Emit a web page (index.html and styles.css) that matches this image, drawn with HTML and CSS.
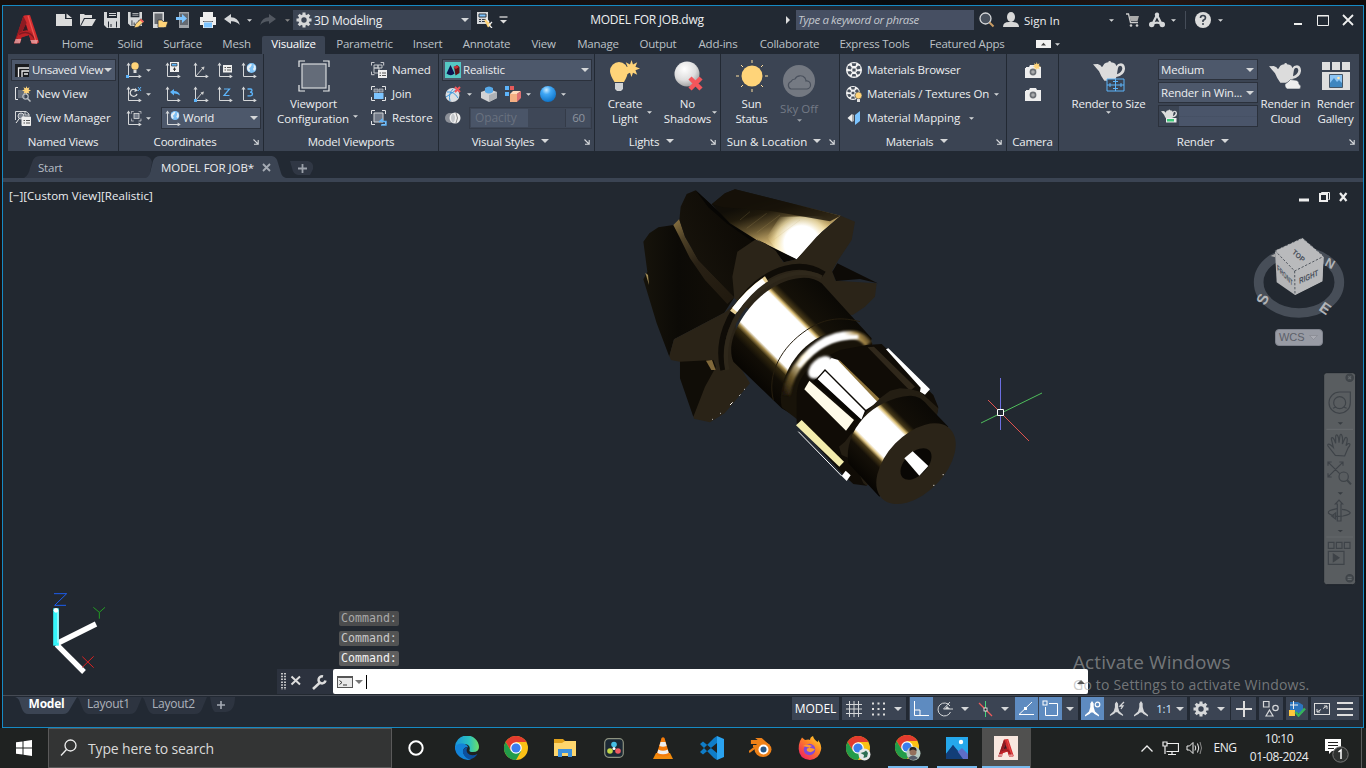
FILE: index.html
```html
<!DOCTYPE html>
<html lang="en">
<head>
<meta charset="utf-8">
<title>MODEL FOR JOB.dwg</title>
<link rel="stylesheet" href="styles.css">
</head>
<body>
<svg class="defs" width="0" height="0">
  <defs>
    <symbol id="dn" viewBox="0 0 8 4"><path d="M0 0H8L4 4Z" fill="currentColor"/></symbol>
    <symbol id="launch" viewBox="0 0 6 6"><path d="M.5 .5L4.5 4.5M5.2 1V5.2H1" stroke="#d8dadd" fill="none" stroke-width="1.1"/></symbol>
    <symbol id="ax" viewBox="0 0 16 16"><path d="M2.5 3V14.5H13" stroke="#d5d7d9" fill="none"/><path d="M.5 3.6L2.5 .6 4.5 3.6ZM12.6 12.5L15.8 14.5 12.6 16.4Z" fill="#d5d7d9"/></symbol>
    <symbol id="globe" viewBox="0 0 10 10"><circle cx="5" cy="5" r="5" fill="#7cc0f5"/><path d="M1 3.2L4 .8 5.5 1.5 4 4.2 2.6 5.2 3.6 7.6 2.6 8.8Q.5 7 .4 5ZM7 1.6L9 3 9.4 6 7.6 8 6.4 6 7.4 4.4Z" fill="#e8eef2"/></symbol>
    <symbol id="sun" viewBox="0 0 16 16"><path d="M8 0L9.4 4.2 13.4 2.2 11.7 6.4 16 8 11.7 9.6 13.4 13.8 9.4 11.9 8 16 6.6 11.9 2.6 13.8 4.3 9.6 0 8 4.3 6.4 2.6 2.2 6.6 4.2Z" fill="#ffd479"/></symbol>
    <symbol id="cnr" viewBox="0 0 16 16"><path d="M.5 4V.5H4M11 .5H14.5V4M.5 11V14.5H4M14.5 11V14.5H11" fill="none" stroke="#e3e4e6"/></symbol>
    <symbol id="gear" viewBox="0 0 16 16"><path d="M8 .5V15.5M.5 8H15.5M2.7 2.7L13.3 13.3M13.3 2.7L2.7 13.3" stroke="#d5d7d9" stroke-width="3"/><circle cx="8" cy="8" r="4.2" fill="none" stroke="#d5d7d9" stroke-width="3"/><circle cx="8" cy="8" r="2.7" fill="#3b4453"/></symbol>
    <symbol id="teapot" viewBox="0 0 96 64"><path d="M0 13L14 12Q24 14 27 22L34 11Q38 8 46 7A4 4 0 1 1 54 7Q62 8 67 11L70 18Q74 10 84 10Q97 12 96 28Q94 47 70 51L66 62H34Q24 50 18 34ZM75 24Q73 34 72 43 86 37 88 26 88 17 81 17 76 18 75 24Z" fill="#dcdcdc" fill-rule="evenodd"/></symbol>
    <symbol id="chk" viewBox="0 0 16 16"><circle cx="8" cy="8" r="8" fill="#f4f4f4"/><path d="M5.7 1.2H10.3L9.6 4H6.4ZM1.8 4.2L4 3.6 5.8 5.8 4.8 7.4 1.6 6.8ZM14.2 4.2L12 3.6 10.2 5.8 11.2 7.4 14.4 6.8ZM6.4 6.6H9.6V9.4H6.4ZM1.5 9.4L4.5 9 6 10.6 4.5 12.8 2.5 12ZM14.5 9.4L11.5 9 10 10.6 11.5 12.8 13.5 12ZM6.4 12H9.6L10.2 14.6H5.8Z" fill="#49515d"/></symbol>
    <symbol id="cam" viewBox="0 0 16 13"><path d="M0 3H1V2H4L5 0H11L12 2H16V13H0Z" fill="#eee"/><circle cx="8" cy="7" r="3.4" fill="#6b6f75"/><circle cx="8" cy="7" r="1.8" fill="#a9abad"/></symbol>
    <symbol id="disk" viewBox="0 0 16 16"><path d="M0 0H3V6H13V0H16V16H3L0 13Z" fill="#d5d7d9"/><path d="M5 1H12V2H5ZM5 3H12V4H5ZM4 9H13V15H4Z" fill="#d5d7d9"/><path d="M4.5 9.5V15.5M12.5 9.5V15.5M7 12V15" stroke="#222933"/></symbol>
    <symbol id="fitA" viewBox="0 0 75 87"><path d="M28 3Q33 0 48 0L75 82 69 86H53L45 60 23 66 18 85H0L7 68Z" fill="#d22b2e"/><path d="M35 25L23 55 43 50Z" fill="#3a1a22"/><path d="M28 3L38 24 9 76 18 85H0Z" fill="#8e1b22"/><path d="M15 54Q40 38 58 54L66 76 53 85 45 60Q30 66 6 72Z" fill="#bd2227"/><path d="M15 58Q45 42 62 72" stroke="#821820" stroke-width="4" fill="none"/><path d="M42 2L67 83" stroke="#ed5550" stroke-width="4"/><path d="M0 85L5 72H22L18 85ZM53 85L49 75H72L69 86Z" fill="#e9afb0" opacity=".75"/></symbol>
    <symbol id="chrome" viewBox="0 0 24 24"><circle cx="12" cy="12" r="12" fill="#fbc116"/><path d="M1.6 6A12 12 0 0 1 22.4 6H12L7 15Z" fill="#e33b2e"/><path d="M1.6 6A12 12 0 0 0 12 24L17.2 15 7 15Z" fill="#229c4a"/><circle cx="12" cy="12" r="5.8" fill="#fff"/><circle cx="12" cy="12" r="4.6" fill="#3b7ded"/></symbol>
    <symbol id="compA" viewBox="0 0 16 16"><path d="M6.3 6V2.5L8 0 9.7 2.5V6L11 10.5 15 14V15.5L10.5 13 9 11.5H7L5.5 13 1 15.5V14L5 10.5Z" fill="currentColor"/></symbol>
  </defs>
</svg>

<div class="window">
  <header class="head">
    <div class="logo"><svg width="25" height="29"><use href="#fitA"/></svg></div>
    <div class="titlebar">
      <svg width="16" height="16"><path d="M0 2H9V7H16V14H0ZM10.5 1.5L16 6H10.5Z" fill="#dcdcdc"/></svg>
      <svg width="16" height="16"><path d="M0 14V2H4L5 3H12V6H4L1 12Z" fill="#dcdcdc"/><path d="M4.7 7H16L12 14H1Z" fill="#dcdcdc"/></svg>
      <svg width="16" height="16"><use href="#disk"/></svg>
      <svg width="16" height="16"><use href="#disk" width="14" height="14"/><path d="M6 16L7.5 12 13 6.8 16 9.5 10.5 15Z" fill="#ffd479" stroke="#222933" stroke-width=".7"/><path d="M13 6.8L16 9.5 14.8 10.7 11.7 8Z" fill="#f15b5b"/></svg>
      <svg width="16" height="16"><path d="M1 0H12V16H1Z" fill="#d5d7d9"/><path d="M2.5 1.5H10.5V12H2.5Z" fill="#686c72"/><path d="M6 8H10L11 9.5H16L14 15.5H6Z" fill="#ffd479" stroke="#222933" stroke-width=".7"/></svg>
      <svg width="16" height="16"><path d="M3 0H13V16H3Z" fill="#9ea2a7"/><path d="M4 1.5H12V13H4Z" fill="#646a72"/><path d="M0 5H6V2L11 6.500 6 11V8H0Z" fill="#7cc4ff"/></svg>
      <svg width="16" height="16"><path d="M3 0H13V5H3ZM0 5H16V13H13V9H3V13H0Z" fill="#eee"/><path d="M3.500 10H12.500V16H3.500Z" fill="#7cc4ff" stroke="#eee"/></svg>
      <svg width="16" height="16"><path d="M0 7L7 2V5.300Q14 5.500 15.800 13 12 9 7 9.300V12Z" fill="#d5d7d9"/></svg>
      <svg class="dn5" ><use href="#dn"/></svg>
      <svg width="16" height="16"><path d="M16 7L9 2V5.300Q2 5.500 .2 13 4 9 9 9.300V12Z" fill="#525861"/></svg>
      <svg class="dn5 dim"><use href="#dn"/></svg>
      <div class="workspace"><svg width="16" height="16"><use href="#gear"/></svg><span>3D Modeling</span><svg class="dn8"><use href="#dn"/></svg></div>
      <svg width="16" height="16"><path d="M0 0H11V12H0Z" fill="#d5d7d9"/><path d="M2 2H9V5H2Z" fill="#7cc4ff" stroke="#333a45"/><path d="M2 7.500H4M5 7.500H9M2 9.500H4M5 9.500H8" stroke="#333a45"/><path d="M7 8L10 7 14 13 11 15.500Z" fill="#ffd479"/><path d="M9 6.500L12 10M15 10L12 13 15 16" stroke="#eee" fill="none" stroke-width="1.300"/></svg>
      <svg width="9" height="8"><path d="M.5 1H8.500" stroke="#ddd" stroke-width="1.300"/><path d="M1 4H8L4.500 7.500Z" fill="#ddd"/></svg>
      <span class="doc-title">MODEL FOR JOB.dwg</span>
      <svg class="pl" width="5" height="8"><path d="M0 0L4 4 0 8Z" fill="#ddd"/></svg>
      <span class="search">Type a keyword or phrase</span>
      <svg width="16" height="16"><circle cx="6.500" cy="6.500" r="5.500" fill="#48505c" stroke="#d5d7d9" stroke-width="1.300"/><path d="M10.500 10.500L14.500 14.500" stroke="#c99c63" stroke-width="2"/></svg>
      <svg width="16" height="16"><ellipse cx="8" cy="5" rx="4" ry="5" fill="#d8d8d8"/><path d="M0 15Q0 10 6 10H10Q16 10 16 15Z" fill="#d8d8d8"/></svg>
      <span class="signin">Sign In</span>
      <svg class="dn5"><use href="#dn"/></svg>
      <svg class="cart" width="14" height="14"><path d="M0 1H2.500L4.500 9.500H12" stroke="#ccc" fill="none" stroke-width="1.300"/><path d="M3.500 3H13L11.500 8H4.500Z" fill="#aaa"/><circle cx="5" cy="12.500" r="1.300" fill="#ccc"/><circle cx="11" cy="12.500" r="1.300" fill="#ccc"/></svg>
      <svg width="16" height="16"><path d="M8 3L3.300 12.300Q8 9 12.700 12.300Z" fill="none" stroke="#d5d7d9" stroke-width="2.300"/><circle cx="8" cy="2.700" r="2.200" fill="#d5d7d9"/><circle cx="2.700" cy="12.500" r="2.700" fill="#d5d7d9"/><circle cx="13.300" cy="12.500" r="2.700" fill="#d5d7d9"/></svg>
      <svg class="dn5"><use href="#dn"/></svg>
      <i class="vsep"></i>
      <svg width="16" height="16"><circle cx="8" cy="8" r="8" fill="#dcdcdc"/><path d="M5.500 6Q5.500 3.500 8 3.500T10.500 6Q10.500 7.200 8 8.500V10" fill="none" stroke="#38404b" stroke-width="1.600"/><circle cx="8" cy="12" r="1" fill="#38404b"/></svg>
      <svg class="dn5"><use href="#dn"/></svg>
      <i></i>
      <svg width="8" height="14"><path d="M0 11H8" stroke="#eee" stroke-width="2"/></svg>
      <svg width="12" height="11"><path d="M.5 .5H11.500V10.500H.5Z" fill="none" stroke="#eee"/><path d="M0 1H12" stroke="#eee"/></svg>
      <svg width="12" height="12"><path d="M1 1L11 11M11 1L1 11" stroke="#eee" stroke-width="1.800"/></svg>
    </div>
    <nav class="tabs">
      <span class="home">Home</span><span>Solid</span><span>Surface</span><span>Mesh</span><span class="on">Visualize</span><span>Parametric</span><span>Insert</span><span>Annotate</span><span>View</span><span>Manage</span><span>Output</span><span>Add-ins</span><span>Collaborate</span><span>Express Tools</span><span>Featured Apps</span>
      <span class="mini"><svg width="15" height="8"><path d="M0 0H15V8H0Z" fill="#f2f2f2"/><path d="M5 5.500H10L7.500 2.800Z" fill="#444"/></svg><svg class="dn5"><use href="#dn"/></svg></span>
    </nav>
  </header>

  <section class="ribbon">
    <div class="panel">
      <div class="rows views">
        <div class="combo"><svg width="14" height="13"><path d="M0 0H14V13H0Z" fill="#1a1c1f"/><path d="M3.500 13V4H14M7 13V7H14M9 10H13" stroke="#eee" fill="none" stroke-width="1.300"/></svg><span class="clip">Unsaved View</span><svg class="dn8"><use href="#dn"/></svg></div>
        <div class="row"><svg width="16" height="16"><path d="M3 1.500H.5V13.500H3" stroke="#e3e4e6" fill="none"/><path d="M3 4H10V12H3Z" fill="#646c79"/><use href="#sun" x="7" y="0" width="9" height="9"/><circle cx="10.500" cy="10.500" r="2.700" fill="none" stroke="#b9bdc3" stroke-width="1.200"/><path d="M12.500 12.500L15.500 15.500" stroke="#b9bdc3" stroke-width="1.500"/></svg><span>New View</span></div>
        <div class="row"><svg width="16" height="16"><path d="M.5 10V1.500H11L14 4V6M10 1.500V5H14" stroke="#d5d7d9" fill="none"/><circle cx="6" cy="6" r="3" fill="#777f8b" stroke="#d5d7d9"/><path d="M1 13L4 9M7 7H15.500V15.500H7Z" stroke="#eee" fill="#eee"/><path d="M8.500 10.500H10M11 10.500H15M8.500 13H10M11 13H15" stroke="#555"/></svg><span>View Manager</span></div>
      </div>
      <div class="ptitle"><span>Named Views</span></div>
    </div>

    <div class="panel">
      <div class="coords">
        <svg width="16" height="16"><use href="#ax"/><rect y="13" width="3" height="3" fill="#5db4fa"/><circle cx="9" cy="4" r="3.700" fill="#ffd479"/><path d="M7.500 8H10.500V11H7.500Z" fill="#ddd"/></svg><svg class="dn5"><use href="#dn"/></svg>
        <svg width="16" height="16"><use href="#ax"/><path d="M5 0H14V10H5Z" fill="#eee"/><path d="M6.500 1.500H12V4H6.500Z" fill="#5db4fa" stroke="#333" stroke-width=".7"/><path d="M9.500 5.500V9M8 7.200H11" stroke="#333"/></svg>
        <svg width="16" height="16"><use href="#ax"/><path d="M3 14L10 6" stroke="#ccc"/><path d="M11.500 4.500L10.800 8 8 5.500Z" fill="#ccc"/></svg>
        <svg width="16" height="16"><use href="#ax"/><path d="M6 3H15V10.500H6Z" fill="#eee"/><path d="M7.500 5.500H9M10 5.500H14M7.500 8H9M10 8H14" stroke="#555"/></svg>
        <svg width="16" height="16"><use href="#ax"/><use href="#globe" x="5.500" y="1" width="10" height="10"/></svg>
        <svg width="16" height="16"><use href="#ax"/><path d="M9.500 3.800A3.500 3.500 0 1 0 11 8" fill="none" stroke="#ddd" stroke-width="1.300"/><path d="M9 2L12 4.500 8.500 6Z" fill="#ddd"/><path d="M12 1L15 5M15 1L12 5" stroke="#5db4fa"/></svg><svg class="dn5"><use href="#dn"/></svg>
        <svg width="16" height="16"><use href="#ax"/><path d="M5 6L9 3V5Q14 5 15 9.500 12 7.300 9 7.500V9.500Z" fill="#5db4fa"/></svg>
        <svg width="16" height="16"><use href="#ax"/><path d="M3 14L9 7" stroke="#ccc"/><path d="M11 5.500L10 9 7.500 6.500Z" fill="#ccc"/><rect x="1" y="13" width="3" height="3" fill="#5db4fa"/></svg>
        <svg width="16" height="16"><use href="#ax"/><path d="M7 3H12.500L7 9.500H12.500" stroke="#5db4fa" fill="none" stroke-width="1.200"/></svg>
        <svg width="16" height="16"><use href="#ax"/><path d="M6.500 3H9.500Q11 3 11 4.500T9 6.200Q11.500 6.500 11.500 8T9.500 9.800H6.500" stroke="#5db4fa" fill="none" stroke-width="1.300"/></svg>
        <svg width="16" height="16"><use href="#ax"/><use href="#cnr" x="5" y="1" width="11" height="11"/><rect x="8" y="3.500" width="5" height="5" fill="#717987" stroke="#ddd" stroke-width=".8"/></svg><svg class="dn5"><use href="#dn"/></svg>
        <div class="combo world"><svg width="16" height="16"><use href="#ax"/><use href="#globe" x="5.500" y="1" width="9" height="9"/></svg><span>World</span><svg class="dn8"><use href="#dn"/></svg></div>
      </div>
      <div class="ptitle lt12"><span>Coordinates</span><svg class="la"><use href="#launch"/></svg></div>
    </div>

    <div class="panel">
      <div class="vports">
        <div class="big w100"><svg width="32" height="32"><path d="M1 7V1H7M25 1H31V7M1 25V31H7M31 25V31H25" fill="none" stroke="#eceded" stroke-width="1.200"/><rect x="4" y="4" width="24" height="24" fill="#646c79" stroke="#d8dadd" stroke-width="1.200"/></svg><span>Viewport</span><span>Configuration <svg class="dn5"><use href="#dn"/></svg></span></div>
        <div class="rows vp">
          <div class="row"><svg width="16" height="16"><use href="#cnr" width="14" height="14"/><path d="M3 3H7V6H3ZM7 3H11V6H7ZM3 6H8V11H3Z" fill="none" stroke="#c5c8cc"/><path d="M7 8H16V16H7Z" fill="#eee"/><path d="M8.500 11H10M11 11H15M8.500 13.500H10M11 13.500H15" stroke="#555"/></svg><span>Named</span></div>
          <div class="row"><svg width="16" height="16"><use href="#cnr"/><path d="M3 3H7V6H3ZM8 3H12V6H8Z" fill="#717987" stroke="#c5c8cc" stroke-width=".7"/><path d="M3 7H12.500V13H3Z" fill="#7cc4ff"/></svg><span>Join</span></div>
          <div class="row"><svg width="16" height="16"><use href="#cnr"/><path d="M3 3H12V12H3Z" fill="#717987" stroke="#d0d3d6"/><path d="M8 12L11 9.500V11.500H15V15H10" fill="none" stroke="#5db4fa" stroke-width="1.400"/></svg><span>Restore</span></div>
        </div>
      </div>
      <div class="ptitle"><span>Model Viewports</span></div>
    </div>

    <div class="panel">
      <div class="rows styles">
        <div class="combo"><svg width="16" height="16"><path d="M0 0H16V16H0Z" fill="#55c8c5"/><path d="M5.500 3L9.500 11.500Q6 15 1.500 11.500Z" fill="#0d1550"/><path d="M9 5L12 3 14.500 5V11L10.500 13.500Z" fill="#5b1015"/><path d="M8 5L12 3.500 14 5 11 7Z" fill="#c83038"/></svg><span>Realistic</span><svg class="dn8"><use href="#dn"/></svg></div>
        <div class="row vicons">
          <svg width="16" height="16"><circle cx="7.500" cy="9" r="7" fill="#dcdfe3"/><path d="M2 6Q9 5 13 12M8 3Q3 8 5 15M1 11Q6 8 12 3" stroke="#419bdf" fill="none"/><path d="M10 1L15 6M15 1L10 6" stroke="#f0555a" stroke-width="2"/></svg><svg class="dn5"><use href="#dn"/></svg>
          <svg width="16" height="16"><path d="M0 6L8 3 16 6V12L8 16 0 12Z" fill="#d2d3d5"/><path d="M8 9L16 6V12L8 16Z" fill="#aeb1b5"/><path d="M4 2Q8-1 12 2V6Q8 9 4 6Z" fill="#57a9e8"/></svg>
          <svg width="16" height="16"><path d="M0 0H4V4H0ZM0 6H4V10H0Z" fill="#5db4fa"/><path d="M5 0H9V4H5Z" fill="#e85b5b"/><path d="M5 8L8 5H16L12 8Z" fill="#ffd9bc"/><path d="M5 8H12V16H5Z" fill="#f4b083"/><path d="M12 8L16 5V12L12 16Z" fill="#e07171"/></svg><svg class="dn5"><use href="#dn"/></svg>
          <svg width="16" height="16"><defs><radialGradient id="bl" cx=".4" cy=".25" r=".8"><stop offset="0" stop-color="#c8eaff"/><stop offset=".35" stop-color="#3fa7f5"/><stop offset="1" stop-color="#0a6fc4"/></radialGradient></defs><circle cx="8" cy="8" r="8" fill="url(#bl)"/></svg><svg class="dn5"><use href="#dn"/></svg>
        </div>
        <div class="row opac"><svg width="16" height="12"><circle cx="5" cy="6" r="5" fill="#8c9098"/><circle cx="10" cy="6" r="5.500" fill="#eee"/><path d="M8 1Q12 6 8 11Q4 6 8 1Z" fill="#c5c8cc"/><path d="M11 1Q14 6 11 11" stroke="#888" fill="none"/></svg><div class="slider"><span class="fillbar">Opacity</span><span class="num">60</span></div></div>
      </div>
      <div class="ptitle lt12"><span>Visual Styles</span><svg class="dn8"><use href="#dn"/></svg><svg class="la"><use href="#launch"/></svg></div>
    </div>

    <div class="panel">
      <div class="bigs lights">
        <div class="big"><svg width="32" height="32"><path d="M1 11A9 9 0 0 1 19 11Q19 15 15 22H5.500Q1 15 1 11Z" fill="#ffd479"/><path d="M6 23H14V29L12 31H8L6 29Z" fill="#d0d2d4"/><use href="#sun" x="14" y="0" width="17" height="17"/></svg><span>Create</span><span>Light</span><svg class="dn5 side"><use href="#dn"/></svg></div>
        <div class="big"><svg width="32" height="32"><defs><radialGradient id="gy" cx=".4" cy=".3" r=".75"><stop offset="0" stop-color="#fff"/><stop offset=".6" stop-color="#ddd"/><stop offset="1" stop-color="#999"/></radialGradient></defs><circle cx="15" cy="14" r="12.500" fill="url(#gy)"/><path d="M18 18L29 29M29 18L18 29" stroke="#f4565b" stroke-width="4.500"/></svg><span>No</span><span>Shadows</span><svg class="dn5 side"><use href="#dn"/></svg></div>
      </div>
      <div class="ptitle lt12"><span>Lights</span><svg class="dn8"><use href="#dn"/></svg><svg class="la"><use href="#launch"/></svg></div>
    </div>

    <div class="panel">
      <div class="bigs sunp">
        <div class="big"><svg width="32" height="32"><circle cx="16" cy="16" r="10.500" fill="#ffd479"/><path d="M16 0V3M16 29V32M0 16H3M29 16H32M5 5L7 7M25 25L27 27M27 5L25 7M5 27L7 25" stroke="#ffe0a0"/></svg><span>Sun</span><span>Status</span></div>
        <div class="big off"><svg width="32" height="32"><circle cx="16" cy="16" r="16" fill="#737881"/><path d="M8 24A4 4 0 0 1 8 16.500 4.500 4.500 0 0 1 12 14 6 6 0 0 1 22 13Q23 15 23 16A4 4 0 0 1 24 24Z" fill="#757a83" stroke="#4a515d" stroke-width="1.200"/></svg><span>Sky Off</span><svg class="dn5"><use href="#dn"/></svg></div>
      </div>
      <div class="ptitle lt12 loc"><span>Sun &amp; Location</span><svg class="dn8"><use href="#dn"/></svg><svg class="la"><use href="#launch"/></svg></div>
    </div>

    <div class="panel">
      <div class="rows mats">
        <div class="row"><svg width="16" height="16"><use href="#chk"/></svg><span>Materials Browser</span></div>
        <div class="row"><svg width="16" height="16"><use href="#chk" width="14" height="14"/><circle cx="12.500" cy="9.500" r="3.500" fill="#ffd479" stroke="#3b4453" stroke-width=".6"/><path d="M11 13H14V16H11Z" fill="#ddd"/></svg><span>Materials / Textures On</span><svg class="dn5"><use href="#dn"/></svg></div>
        <div class="row"><svg width="16" height="16"><path d="M1.500 8L6 4V12Z" fill="#eee"/><path d="M6 4L8 5V11L6 12Z" fill="#aaa"/><path d="M9 5L14 1V11L9 15Z" fill="#7cc4ff"/></svg><span>Material Mapping</span><svg class="dn5"><use href="#dn"/></svg></div>
      </div>
      <div class="ptitle lt12"><span>Materials</span><svg class="dn8"><use href="#dn"/></svg><svg class="la"><use href="#launch"/></svg></div>
    </div>

    <div class="panel">
      <div class="rows camp">
        <div class="row"><svg width="16" height="16"><use href="#cam" y="3" width="16" height="13"/><use href="#sun" x="7.500" y="0" width="8.500" height="8.500"/></svg></div>
        <div class="row"><svg width="16" height="13"><use href="#cam"/></svg></div>
      </div>
      <div class="ptitle"><span>Camera</span></div>
    </div>

    <div class="panel">
      <div class="renderp">
        <div class="big"><svg width="34" height="32"><use href="#teapot" x="1" width="32" height="21.300"/><path d="M15 19H32V31H15Z" fill="#3b4453" stroke="#5db4fa"/><path d="M15 25H32M23.500 19V31M18 23V27M29 23V27M21 21.500H26M21 28.500H26" stroke="#5db4fa"/></svg><span>Render to Size</span><svg class="dn5"><use href="#dn"/></svg></div>
        <div class="rsel">
          <div class="combo"><span>Medium</span><svg class="dn8"><use href="#dn"/></svg></div>
          <div class="combo"><span>Render in Win...</span><svg class="dn8"><use href="#dn"/></svg></div>
          <div class="prog"><svg width="18" height="14"><use href="#teapot" x="1" y="0" width="16" height="10.700"/><path d="M6 9H16.500V13.500H6Z" fill="#eee"/><path d="M7 10H14V12.500H7Z" fill="#3dc878"/></svg><i></i></div>
        </div>
        <div class="big"><svg width="33" height="32"><use href="#teapot" x="0" y="2" width="32" height="21.300"/><path d="M17 28Q14 24 19 22 21 18 25 20 30 20 30 24 33 26 31 29H18Z" fill="#eee" stroke="#3b4453" stroke-width=".6"/></svg><span>Render in</span><span>Cloud</span></div>
        <div class="big"><svg width="28" height="32"><path d="M0 2H8V10H0ZM10 2H18V10H10ZM20 2H28V10H20ZM0 12H28V30H0Z" fill="#dedede"/><path d="M7.500 14.500H20.500V27.500H7.500Z" fill="#8cc5f5" stroke="#456"/><path d="M8 23L12 18 15 22 17 20 20 23V27H8Z" fill="#3f86bf"/><circle cx="16.500" cy="18" r="1.300" fill="#ffe8b0"/></svg><span>Render</span><span>Gallery</span></div>
      </div>
      <div class="ptitle lt12"><span>Render</span><svg class="dn8"><use href="#dn"/></svg><svg class="la"><use href="#launch"/></svg></div>
    </div>
  </section>

  <div class="doctabs">
    <div class="dt start"><span>Start</span></div>
    <div class="dt cur"><span>MODEL FOR JOB*</span><svg width="9" height="9"><path d="M1 1L8 8M8 1L1 8" stroke="#a5abb4" stroke-width="1.800"/></svg></div>
    <div class="dt add"><svg width="9" height="9"><path d="M4.500 0V9M0 4.500H9" stroke="#9aa0a9" stroke-width="1.800"/></svg></div>
  </div>

  <main class="viewport">
    <svg class="canvas" width="1361" height="513" viewBox="3 182 1361 513">
      <defs>
        <linearGradient id="cy" gradientUnits="userSpaceOnUse" x1="0" y1="240" x2="250" y2="-10"><stop offset="0" stop-color="#070502"/><stop offset=".17" stop-color="#110d06"/><stop offset=".24" stop-color="#33290f"/><stop offset=".27" stop-color="#a58b4d"/><stop offset=".295" stop-color="#fff"/><stop offset=".64" stop-color="#fff"/><stop offset=".66" stop-color="#d9bd75"/><stop offset=".685" stop-color="#4a3b19"/><stop offset=".74" stop-color="#141008"/><stop offset="1" stop-color="#0b0905"/></linearGradient>
        <linearGradient id="en" gradientUnits="userSpaceOnUse" x1="0" y1="-70" x2="207" y2="-277"><stop offset="0" stop-color="#070502"/><stop offset=".2" stop-color="#151008"/><stop offset=".26" stop-color="#4a3b19"/><stop offset=".29" stop-color="#e2c98a"/><stop offset=".315" stop-color="#fff"/><stop offset=".62" stop-color="#fff"/><stop offset=".65" stop-color="#d9bd75"/><stop offset=".68" stop-color="#453818"/><stop offset=".74" stop-color="#120e07"/><stop offset="1" stop-color="#0b0905"/></linearGradient>
        <linearGradient id="rb" gradientUnits="userSpaceOnUse" x1="430" y1="55" x2="480" y2="235"><stop offset="0" stop-color="#110e08"/><stop offset=".18" stop-color="#1f190c"/><stop offset=".42" stop-color="#665530"/><stop offset=".65" stop-color="#c3a768"/><stop offset=".85" stop-color="#fff3c8"/><stop offset="1" stop-color="#fff"/></linearGradient>
        <radialGradient id="rw" gradientUnits="userSpaceOnUse" cx="515" cy="190" r="105" ><stop offset="0" stop-color="#fff"/><stop offset=".5" stop-color="#fff"/><stop offset=".75" stop-color="#fff0bd" stop-opacity=".7"/><stop offset="1" stop-color="#f0d890" stop-opacity="0"/></radialGradient>
        <linearGradient id="st" gradientUnits="userSpaceOnUse" x1="135" y1="125" x2="300" y2="350"><stop offset="0" stop-color="#846e3f"/><stop offset=".2" stop-color="#4d4026"/><stop offset=".5" stop-color="#292115"/><stop offset="1" stop-color="#211a0f"/></linearGradient>
        <linearGradient id="lb" gradientUnits="userSpaceOnUse" x1="50" y1="300" x2="240" y2="300"><stop offset="0" stop-color="#15120a"/><stop offset=".5" stop-color="#0c0a06"/><stop offset="1" stop-color="#100d07"/></linearGradient>
        <linearGradient id="mb" gradientUnits="userSpaceOnUse" x1="150" y1="200" x2="320" y2="130"><stop offset="0" stop-color="#17130b"/><stop offset="1" stop-color="#0e0b06"/></linearGradient>
        <linearGradient id="bead" gradientUnits="userSpaceOnUse" x1="320" y1="230" x2="575" y2="50"><stop offset="0" stop-color="#1d170b"/><stop offset=".15" stop-color="#6b5729"/><stop offset=".34" stop-color="#fff3cf"/><stop offset=".45" stop-color="#fff"/><stop offset=".8" stop-color="#fff"/><stop offset=".9" stop-color="#a98b4b"/><stop offset="1" stop-color="#2b220f"/></linearGradient>
        <filter id="soft"><feGaussianBlur stdDeviation="2.500"/></filter>
      </defs>
      <g transform="translate(630 180) scale(.33333)">
        <path d="M40 185L58 160 85 142 130 135 170 190 313 352 283 398 132 478 118 530 80 430 40 298 52 275Z" fill="url(#lb)"/>
        <path d="M46 278L54 285 57 315Z" fill="#a08b56"/>
        <path d="M130 135L148 117 165 170 205 240 313 352 292 372 225 300 180 235 148 170Z" fill="url(#st)"/>
        <path d="M118 528L132 478 283 398 310 375 330 560 360 610 284 700 240 727 192 716 150 545 123 540Z" fill="#2a2317"/>
        <path d="M150 545L250 540 258 560 225 620 190 710 150 595Z" fill="#100d07"/>
        <path d="M228 542L246 540 257 570 244 570Z" fill="#80683a"/>
        <path d="M148 120L152 80 170 42 197 31 245 75 300 125 380 180 330 215 313 352 205 240 165 170Z" fill="url(#mb)"/>
        <path d="M197 31L245 75 300 125 380 178 370 186 290 130 235 82Z" fill="#070604"/>
        <path d="M245 73L285 40 315 28 632 107 575 155 500 238 440 210 380 180 300 130Z" fill="url(#rb)"/>
        <path d="M632 107L575 155 500 238 440 210 410 170 450 110Z" fill="url(#rw)"/>
        <path d="M245 73L285 40 315 28 632 107 600 124 420 92 280 82Z" fill="#171209" opacity=".8"/>
        <g stroke="#c5ac6c" stroke-width="1.500" opacity=".35"><path d="M350 145L410 100M380 158L450 105M410 170L490 112M330 120L360 95M430 180L510 120"/></g>
        <path d="M380 178L500 238 462 247 436 215Z" fill="#0a0805"/>
        <path d="M322 215L375 179 405 190 437 212 460 247 500 238 560 170 632 107 675 125 665 180 625 240 607 272 617 302 740 310 735 350 705 380 668 405 620 400 400 420 313 355 307 290Z" fill="#2b2418"/>
        <path d="M622 250L743 310 690 297 618 303 607 275Z" fill="#0d0a06"/>
        <path d="M280 570C258 485 295 400 360 330C420 270 510 235 582 283" fill="none" stroke="#0f0c07" stroke-width="18"/>
        <path d="M308 398C335 360 370 322 410 297" fill="none" stroke="#e8d196" stroke-width="19"/>
        <path d="M314 390C338 358 370 326 402 303" fill="none" stroke="#fff" stroke-width="19"/>
        <path d="M292 570C275 490 310 410 368 350C425 290 510 260 575 292" fill="none" stroke="#2f281b" stroke-width="13"/>
        <path d="M310 545C282 480 350 370 425 325C485 287 545 285 575 310L725 475 715 520 505 715 455 685Z" fill="url(#cy)"/>
        <path d="M430 660C410 580 455 500 530 450C590 410 640 412 690 425" fill="none" stroke="#251d0e" stroke-width="3"/>
      </g>
      <g transform="translate(680 320) scale(.33333)">
        <path d="M305 262C290 190 340 90 420 50C490 20 560 15 577 72L560 110 370 290 350 297Z" fill="#181309"/>
        <path d="M320 225C325 150 400 70 470 50C520 38 545 45 565 72" fill="none" stroke="url(#bead)" stroke-width="23" filter="url(#soft)"/>
        <path d="M355 140C400 80 460 50 535 50" fill="none" stroke="#fff" stroke-width="12" filter="url(#soft)"/>
        <path d="M350 240Q345 160 430 115L480 90 560 75 605 72 760 225 775 262 770 285 600 400 560 497 520 492 485 460 350 310Z" fill="#100c06"/>
        <ellipse cx="420" cy="142" rx="42" ry="25" transform="rotate(-42 420 142)" fill="#fff" filter="url(#soft)"/>
        <path d="M563 82L582 80 705 200 690 212Z" fill="#30281b"/>
        <path d="M618 88L625 85 750 208 735 224 720 215 722 203Z" fill="#fff"/>
        <path d="M455 114L475 120 600 242 557 270 440 155 425 145Z" fill="#fff"/>
        <path d="M473 120L480 122 600 238 592 245Z" fill="#8f753c"/>
        <path d="M435 150L557 272 545 302 410 178Z" fill="#fff" stroke="#0b0804" stroke-width="4"/>
        <path d="M388 182L522 300 498 332 373 208Z" fill="#fffbe9"/>
        <path d="M404 180L534 298" stroke="#080603" stroke-width="9"/>
        <path d="M365 300L492 425 478 440 348 316Z" fill="#f3ecad"/>
        <path d="M355 335L485 468" stroke="#fff" stroke-width="3"/>
        <path d="M497 452L512 466 500 483 485 468Z" fill="#fff"/>
        <path d="M477 380L495 365 510 345 530 325 560 275 600 235 630 212 660 205 690 207 720 215 775 265 770 290 700 340 560 497 550 490 520 420 485 405Z" fill="#241e13"/>
        <path d="M598 530L505 430C490 330 580 235 690 227Q720 225 745 258L805 320Z" fill="url(#en)"/>
        <ellipse cx="708" cy="431" rx="146" ry="87" transform="rotate(-46 708 431)" fill="#2b2418"/>
        <ellipse cx="708" cy="432" rx="57" ry="34" transform="rotate(-46 708 432)" fill="#090704"/>
        <path d="M673 415L698 394 745 438 718 467Z" fill="#fff"/>
        <path d="M97 298H99M150 255L158 247M178 227L181 224M192 208H194M788 464H791M760 496H763M120 280H122" stroke="#fff" stroke-width="3"/>
      </g>
      <path d="M988 400L1029 441" stroke="#e0524e"/><path d="M981 423L1042 393" stroke="#4fbe5c"/><path d="M1000.500 378V430" stroke="#6c6ee0"/><path d="M997.500 409.500H1003.500V415.500H997.500Z" fill="#222933" stroke="#fff"/>
      <g transform="translate(0 580) scale(.33333)">
        <path d="M168 192L288 132" stroke="#fff" stroke-width="16"/><path d="M170 194L252 276" stroke="#fff" stroke-width="16"/><path d="M168 85V197" stroke="#35f5fa" stroke-width="17"/><path d="M174 92V188" stroke="#b9fdff" stroke-width="4"/><circle cx="168" cy="91" r="7" fill="#fff"/>
        <g fill="none" stroke-width="3"><path d="M162 41H200L164 76H198" stroke="#1c5df0"/><path d="M280 82L298 97 315 82M298 97V116" stroke="#239e23"/><path d="M247 230L281 263M281 229L247 262" stroke="#d22"/></g>
      </g>
      <g transform="translate(1230 220) scale(.33333)">
        <ellipse cx="207" cy="187" rx="121" ry="92" fill="none" stroke="#474e58" stroke-width="29"/>
        <path d="M135 92L217 54 281 109 277 184 195 225 140 187Z" fill="#b4b5b7"/>
        <path d="M135 92L217 54 281 109 194 153Z" fill="#b9babc"/><path d="M194 153L281 109 277 184 195 225Z" fill="#b8b9bb"/>
        <path d="M135 92L194 153 281 109M194 153L195 225M135 92L217 54 281 109" fill="none" stroke="#3d444d" stroke-width="2.500" stroke-dasharray="7 5"/>
        <g class="cube"><text transform="matrix(.7 .62 -.55 .75 185 99)">TOP</text><text transform="matrix(.8 -.37 .05 1.1 208 192)">RIGHT</text><text transform="matrix(.58 .62 .05 1.1 142 150)">FRONT</text></g>
        <g class="compass"><text transform="translate(97 237) rotate(-65)" x="-15" y="17">S</text><text transform="translate(286 264) rotate(35)" x="-15" y="17">E</text><text class="n" transform="translate(301 129) rotate(28)" x="-14" y="14">N</text></g><path d="M122 108L136 101V112Z" fill="#aaa"/>
      </g>
    </svg>
    <div class="vlabel">[−][Custom View][Realistic]</div>
    <svg class="mdi" width="52" height="12"><path d="M0 9H10" stroke="#eee" stroke-width="3"/><path d="M22.500 2.500V1.500H30.500V8.500H29.500" fill="none" stroke="#eee"/><rect x="21" y="3" width="7" height="7" fill="none" stroke="#eee" stroke-width="2"/><path d="M41 2L47.500 10M47.500 2L41 10" stroke="#eee" stroke-width="2.200"/></svg>
    <div class="wcs">WCS <svg width="9" height="5"><path d="M.5 .5H8.500L4.500 4.500Z" fill="#a9abb3" stroke="#85888f" stroke-width=".7"/></svg></div>
    <svg class="navbar" width="34" height="214" viewBox="70 34 102 642">
      <rect x="72" y="36" width="96" height="636" rx="9" fill="#595d60" stroke="#1d232a" stroke-width="3"/>
      <g fill="none" stroke="#3e4348" stroke-width="3.500">
        <circle cx="150" cy="51" r="11" fill="#43484c"/><path d="M146 47L154 55M154 47L146 55" stroke="#62676b"/>
        <path d="M120 94H152V126A32 32 0 1 1 120 94Z"/><circle cx="120" cy="126" r="18"/><path d="M100 143L109 139M141 143L132 139"/>
        <path d="M80 206H160M80 529H160" stroke="#64686b"/>
        <path d="M107 284Q92 265 85 256C82 248 90 248 101 260L95 235C95 228 102 228 108 248L108 227C109 219 117 220 118 246L121 224C124 217 131 223 128 250L136 232C142 227 146 233 139 255L145 249C153 247 153 254 145 262L135 286Z"/>
        <path d="M86 305L129 348M129 305L86 348M85 315V304H96M119 304H130V315M85 338V349H96"/><circle cx="132" cy="348" r="14" fill="#595d60"/><path d="M142 358L154 371" stroke-width="6"/>
        <path d="M113 481V430H107L118 418 129 430H124V481Z"/><path d="M112 444Q83 449 86 457 100 470 130 466 155 461 151 455 143 447 127 446M96 466L108 457V475Z"/>
        <path d="M86 545H103V563H86ZM110 545H127V563H110ZM134 545H151V563H134ZM86 572H133V611H86Z"/><path d="M101 580V603L118 591Z" fill="#3e4348"/>
        <circle cx="150" cy="653" r="11" fill="#43484c"/><path d="M144 650H156M144 656H156" stroke="#62676b"/>
      </g>
      <path d="M114 185H130L122 192ZM114 395H130L122 402ZM114 508H130L122 515Z" fill="#363b40"/>
    </svg>
    <div class="history"><span class="h1">Command:</span><span class="h2">Command:</span><span class="h3">Command:</span></div>
    <div class="cmd">
      <svg width="56" height="25"><path d="M5 4V21M8 4V21" stroke="#ddd" stroke-width="1.700" stroke-dasharray="1.500 1.300"/><path d="M14.500 7.500L23 15.500M23 7.500L14.500 15.500" stroke="#ddd" stroke-width="2"/><path d="M36 20L43.500 13" stroke="#ddd" stroke-width="2.500"/><path d="M46 7.500A3.500 3.500 0 1 0 48.500 11.500" stroke="#ddd" stroke-width="2.500" fill="none"/></svg>
      <div class="cmdin"><svg width="16" height="12"><rect x=".5" y=".5" width="15" height="11" fill="#e8e8e8" stroke="#555"/><path d="M0 1H16" stroke="#555" stroke-width="2"/><path d="M2.500 4.500L5 6.500 2.500 8.500M6 9H10" fill="none" stroke="#333"/></svg><svg class="dn8 g"><use href="#dn"/></svg><i></i><svg class="up" width="8" height="4"><path d="M0 4H8L4 0Z" fill="#555"/></svg></div>
    </div>
  </main>

  <footer class="status">
    <div class="ltabs"><span class="lt model">Model</span><span class="lt l2">Layout1</span><span class="lt l2">Layout2</span><span class="lt plus"><svg width="8" height="8"><path d="M4 0V8M0 4H8" stroke="#a5abb4" stroke-width="1.600"/></svg></span></div>
    <div class="sgroup s1">MODEL</div>
    <div class="sgroup s2"><svg width="16" height="16"><path d="M3.500 0V16M8 0V16M12.500 0V16M0 3.500H16M0 8H16M0 12.500H16" stroke="#d5d7d9"/></svg><svg width="14" height="14"><path d="M1 1.500H14M1 7H14M1 12.500H14" stroke="#ddd" stroke-width="2" stroke-dasharray="2 3.500"/></svg><svg class="dn8"><use href="#dn"/></svg></div>
    <div class="sgroup s3">
      <b><svg width="18" height="18"><path d="M2.500 1V15.500H17M2.500 10H8V15.500" fill="none" stroke="#fff"/></svg></b>
      <svg width="18" height="16"><path d="M14 5A6.500 6.500 0 1 0 14.500 11" fill="none" stroke="#d5d7d9"/><path d="M7.500 8L14 1M7.500 8H17" stroke="#d5d7d9"/><path d="M11 5L14 8 9 8Z" fill="#d5d7d9"/></svg><svg class="dn8"><use href="#dn"/></svg>
      <svg width="16" height="16"><path d="M2 2L15 15" stroke="#f05b5b" stroke-width="1.200"/><path d="M8.500 0V16" stroke="#47d27c"/><rect x="7" y="7" width="3" height="3" fill="#222" stroke="#fff" stroke-width=".8"/></svg><svg class="dn8"><use href="#dn"/></svg>
      <b><svg width="18" height="16"><path d="M15 1L2 13.500H17" fill="none" stroke="#fff"/><rect x="7" y="6" width="3" height="3" fill="#fff"/></svg></b>
      <b><svg width="18" height="18"><rect x="1" y="1" width="4" height="4" fill="none" stroke="#fff"/><path d="M7 3.500H15.500V15.500H3.500V7" fill="none" stroke="#fff"/></svg></b>
      <svg class="dn8"><use href="#dn"/></svg>
    </div>
    <div class="sgroup s4">
      <b><svg width="18" height="18"><use href="#compA" y="1" width="16" height="16"/><circle cx="13.500" cy="4.500" r="2.300" fill="none" stroke="#fff" stroke-width="1.200"/></svg></b>
      <svg width="16" height="16"><use href="#compA" width="15" height="16"/><path d="M15 1L11 5H14L12 8" fill="none" stroke="#d5d7d9" stroke-width="1.300"/></svg>
      <svg width="16" height="16"><use href="#compA"/></svg><span>1:1</span><svg class="dn8"><use href="#dn"/></svg>
    </div>
    <div class="sgroup s5"><svg width="16" height="16"><use href="#gear"/></svg><svg class="dn8"><use href="#dn"/></svg></div>
    <div class="sgroup s6"><svg width="16" height="16"><path d="M8 0V16M0 8H16" stroke="#ddd" stroke-width="2"/></svg></div>
    <div class="sgroup s7"><svg width="18" height="17"><path d="M1.500 1.500H7V7H1.500ZM7.500 10L11 16H4Z" fill="none" stroke="#d5d7d9" stroke-width="1.200"/><circle cx="13.500" cy="8" r="2.700" fill="none" stroke="#d5d7d9" stroke-width="1.200"/></svg></div>
    <div class="sgroup s8"><svg width="17" height="16"><path d="M1 1H9L14 4V12H1Z" fill="#2c75be"/><path d="M0 9H6V15H0Z" fill="#ffc83c"/><path d="M1 4H9M4.500 0V8" stroke="#eee"/><path d="M6.500 11L9.500 14.500 16 7.500" fill="none" stroke="#36b35a" stroke-width="2.500"/></svg></div>
    <div class="sgroup s9"><svg width="16" height="12"><rect x=".5" y=".5" width="15" height="11" fill="none" stroke="#ddd"/><path d="M3 6V9H6M3 9L7 6.500M13 6V3H10M13 3L9 5.500" fill="none" stroke="#ddd"/></svg><svg width="16" height="14"><path d="M0 1H16M0 7H16M0 13H16" stroke="#ddd" stroke-width="2"/></svg></div>
  </footer>
</div>

<div class="taskbar">
  <div class="win"><svg width="16" height="16"><path d="M0 2.300L6.500 1.400V7.500H0ZM7.500 1.200L16 0V7.500H7.500ZM0 8.500H6.500V14.600L0 13.700ZM7.500 8.500H16V16L7.500 14.800Z" fill="#fff"/></svg></div>
  <div class="tsearch"><svg width="18" height="18"><circle cx="10.500" cy="6.500" r="5.500" fill="none" stroke="#eee" stroke-width="1.300"/><path d="M6.500 10.500L1 16.500" stroke="#eee" stroke-width="1.300"/></svg><span>Type here to search</span></div>
  <div class="apps">
    <div class="cortana"><svg width="16" height="16"><circle cx="8" cy="8" r="6.700" fill="none" stroke="#fff" stroke-width="2"/></svg></div>
    <div><svg width="24" height="24"><defs><linearGradient id="eg"><stop offset="0" stop-color="#1793dd"/><stop offset=".6" stop-color="#2cc3bd"/><stop offset="1" stop-color="#6ee068"/></linearGradient></defs><path d="M0 12A12 12 0 0 1 24 11Q24 16 18 16 14 16 14.500 14 16 9 10 8 4 8 0 14Z" fill="url(#eg)"/><path d="M0 12Q1 7 8 7.500 12 8 13 11 8 11 8 16 9 21 16 23.500 10 25 5 21 0 17 0 12Z" fill="#1383d8"/><path d="M13 11Q7 12 8 17 11 24 16 23 20 22 22.500 18 16 21 12.500 17 10.500 14 13 11Z" fill="#0c509f"/></svg></div>
    <div><svg width="24" height="24"><use href="#chrome"/></svg></div>
    <div><svg width="22" height="20"><path d="M0 1H9L11 3H21V18H0Z" fill="#e0a11b"/><path d="M0 5H8L11 3H22V18H0Z" fill="#fdd66d"/><path d="M4 19V11H18V19H14V15H8V19Z" fill="#3d91dc"/></svg></div>
    <div><svg width="20" height="20"><rect x=".7" y=".7" width="18.600" height="18.600" rx="4" fill="#1c2935" stroke="#8d927f" stroke-width="1.200"/><circle cx="10" cy="6.500" r="2.800" fill="#46bfe5"/><circle cx="6" cy="13" r="2.800" fill="#c2d746"/><circle cx="14" cy="13" r="2.800" fill="#ee5a61"/><circle cx="10" cy="10.500" r="1.500" fill="#fff"/></svg></div>
    <div><svg width="20" height="22"><path d="M3 16H17L20 22H0Z" fill="#f28b0c"/><path d="M8.500 1Q10-.5 11.500 1L16.500 18Q10 21 3.500 18Z" fill="#f47b0a"/><path d="M7.500 5H12.500L13.600 9Q10 10.500 6.400 9ZM5.300 12.500Q10 15 14.700 12.500L15.700 16Q10 18.500 4.300 16Z" fill="#eee"/></svg></div>
    <div><svg width="24" height="24"><path d="M17 0L24 3V21L17 24Z" fill="#2aa3f0"/><path d="M17 0V7L3 18.500 0 16 14 2ZM17 24V17L3 5.500 0 8 14 22Z" fill="#0f7dc8"/></svg></div>
    <div><svg width="23" height="20"><ellipse cx="14" cy="11.500" rx="8.500" ry="7.500" fill="#ee8118"/><path d="M0 14L12 5H3V3H12L8 0 11 0 20 8M4 8H12" fill="none" stroke="#ee8118" stroke-width="2.200"/><circle cx="14.500" cy="11.500" r="5" fill="#fff"/><circle cx="14.500" cy="11.500" r="3" fill="#265787"/></svg></div>
    <div><svg width="24" height="24"><defs><linearGradient id="ff" x1="1" y1="0" x2=".2" y2="1"><stop offset="0" stop-color="#ffe12e"/><stop offset=".45" stop-color="#ff8524"/><stop offset="1" stop-color="#f11e62"/></linearGradient></defs><path d="M2 5L4 1.500 7 4Q11 3 12 4 12 1 15 0 16 4 20 6V4Q24 9 23 14 21 23 12 24 1 23 .7 13 .7 8 2 5Z" fill="url(#ff)"/><circle cx="11.500" cy="13.500" r="5.800" fill="#804ad8"/><path d="M5 10Q9 7 14 10L11 12Q8 12 9 15 14 18 17 13" fill="#ff9a2e"/></svg></div>
    <div><svg width="25" height="25"><use href="#chrome" width="24" height="24"/><circle cx="18.500" cy="18.500" r="6" fill="#e5e8e8"/><path d="M14.500 17L18 16 20 14.500 22 17 21 21 17.500 22 18 19Z" fill="#2d6e53"/></svg></div>
    <div class="run"><svg width="26" height="26"><use href="#chrome" width="24" height="24"/><circle cx="18.500" cy="18.500" r="7" fill="#b6c9c1"/><circle cx="18" cy="17" r="3.500" fill="#94705c"/><path d="M14.500 16Q14 11.500 18 12 22 12 21.500 16 18 13 14.500 16Z" fill="#251f1e"/><path d="M13 23Q18 18 23 23Q18 27 13 23Z" fill="#555c69"/></svg></div>
    <div class="run"><svg width="22" height="22"><path d="M0 0H22V22H0Z" fill="#25a8ec"/><path d="M0 17L7 8 13 15 16 12 22 18V22H0Z" fill="#174783"/><path d="M10 16L16 11 22 17V22H14Z" fill="#5e6dc6"/><path d="M0 17L7 8 17 22H0Z" fill="#123e78"/><circle cx="15" cy="5" r="2.200" fill="#fff"/></svg></div>
    <div class="run act"><svg width="24" height="24"><path d="M0 0H24V24H0Z" fill="#f8e7df"/><use href="#fitA" x="4" y="3" width="16" height="18"/></svg></div>
  </div>
  <div class="tray">
    <svg width="12" height="7"><path d="M.5 6.500L6 1 11.500 6.500" fill="none" stroke="#eee" stroke-width="1.300"/></svg>
    <svg width="17" height="14"><path d="M5 2.500H16.500V10.500H4.500M1 1H5V5H1ZM3 5V13M10 10.500V13M6 13.500H14" fill="none" stroke="#eee" stroke-width="1.200"/></svg>
    <svg width="17" height="14"><path d="M1 5H3.500L7 1.500V12.500L3.500 9H1Z" fill="none" stroke="#eee"/><path d="M9 4.500Q10.500 7 9 9.500M11.500 2.500Q14 7 11.500 11.500" fill="none" stroke="#eee"/><path d="M14 1Q17 7 14 13" fill="none" stroke="#888"/></svg>
    <span class="eng">ENG</span>
    <span class="clock"><span>10:10</span><span>01-08-2024</span></span>
    <svg class="note" width="26" height="25"><path d="M1 1H17V13H8L5 16V13H1Z" fill="#fff"/><path d="M4 4.500H14M4 7.500H14M4 10.500H10" stroke="#222"/><circle cx="16.500" cy="16.500" r="7.700" fill="#2f3231" stroke="#777"/><path d="M14.500 14L17 12V21" stroke="#fff" fill="none" stroke-width="1.500"/></svg>
  </div>
  <i class="edge"></i>
</div>
<div class="watermark"><div class="wa">Activate Windows</div><div class="wb">Go to Settings to activate Windows.</div></div>
</body>
</html>
```
FILE: styles.css
```css
* { box-sizing: border-box; }
body { margin: 0; width: 1366px; height: 768px; overflow: hidden; position: relative; display: flex; flex-direction: column; background: linear-gradient(90deg, #17100f, #0b0d10 30%, #181111 45%, #080b0e 65%, #241714 85%, #100c0c); font: 11.5px/15px "Open Sans", "Noto Sans", sans-serif; letter-spacing: -.22px; color: #eceef0; }
svg { display: block; flex: none; }
.defs { position: absolute; }
.dn5 { width: 5px; height: 3px; color: #d5d7d9; }
.dn8 { width: 8px; height: 4px; color: #d5d7d9; }
.dim { color: #888; }
.window { margin: 5px 2px 0; width: 1362px; height: 723px; border: 1px solid #168ac4; background: #222933; display: flex; flex-direction: column; flex: none; }
.head { height: 48px; display: grid; grid-template-columns: 49px 1fr; grid-template-rows: 28px 20px; flex: none; }
.logo { grid-row: 1 / 3; padding: 9px 0 0 11px; }
.titlebar { display: grid; align-items: center; justify-items: center; grid-template-columns: repeat(8, 24px) 10px 28px 11px 178px 27px 10px 278px 10px 178px 25px 24px 82px 12px 28px 24px 8px 16px 20px 14px 59px 24px 26px 24px; white-space: nowrap; }
.workspace { width: 178px; height: 20px; background: #3b4453; display: flex; align-items: center; padding: 0 2px 0 3px; }
.workspace span { flex: 1; padding-left: 2px; font-size: 12px; letter-spacing: -.25px; }
.doc-title { font-size: 12px; letter-spacing: -.23px; padding-bottom: 2px; }
.pl { margin-right: 5px; }
.cart { margin-left: 3px; }
.search { width: 178px; height: 20px; background: #464f62; padding: 2px; font-style: italic; color: #c3c7cd; letter-spacing: -.4px; }
.signin { justify-self: start; padding-left: 1px; letter-spacing: 0; }
.vsep { width: 1px; height: 18px; background: #454c58; }
.tabs { display: grid; align-items: end; grid-template-columns: 54px 48px 57px 51px 63px 79px 47px 71px 43px 66px 54px 66px 77px 93px 92px 60px; color: #bcc1c7; white-space: nowrap; }
.tabs span { height: 18px; line-height: 15px; text-align: center; }
.tabs .home { padding-right: 3px; }
.tabs .on { background: #3b4453; color: #fff; border-radius: 2px 2px 0 0; }
.tabs .mini { display: flex; gap: 4px; align-items: center; padding: 0 0 2px 23px; height: 18px; }
.ribbon { height: 97px; flex: none; display: grid; grid-template-columns: 110px 144px 174px 155px 125px 118px 166px 51px 300px; gap: 1px; margin-left: 5px; }
.panel { background: #3b4453; display: flex; flex-direction: column; min-width: 0; white-space: nowrap; }
.panel > :first-child { height: 77px; flex: none; }
.ptitle { height: 20px; display: flex; align-items: center; justify-content: center; gap: 7px; padding: 0 3px; position: relative; }
.lt12 { padding-right: 15px; }
.loc { letter-spacing: 0; gap: 6px; }
.la { width: 6px; height: 6px; position: absolute; right: 4px; top: 8px; }
.rows { display: grid; grid-template-rows: 24px 24px 24px; padding-top: 4px; }
.row { display: flex; align-items: center; gap: 5px; }
.row > span { padding-bottom: 1px; }
.combo { height: 22px; margin: 1px 0; background: #4d586b; border: 1px solid #2b313c; display: flex; align-items: center; gap: 3px; padding: 0 3px; }
.combo span { flex: 1; padding-bottom: 1px; }
.views { padding-left: 7px; }
.views .combo { width: 105px; margin-left: -4px; padding: 0 3px; gap: 3px; }
.views .combo .clip { margin-right: -3px; letter-spacing: -.3px; }
.views .row { letter-spacing: -.1px; }
.coords { display: grid; grid-template-columns: 18px 21px 28px 24px 24px 18px; grid-template-rows: 24px 24px 24px; padding: 4px 0 0 7px; align-items: center; }
.coords .dn5 { margin-left: 2px; }
.world { grid-column: 3 / 7; width: 100px; margin-left: -4px; gap: 2px; padding: 0 2px 0 3px; }
.vports { display: grid; grid-template-columns: 107px 67px; }
.big { display: flex; flex-direction: column; align-items: center; padding-top: 6px; position: relative; line-height: 15px; }
.big > svg:first-child { margin-bottom: 4px; }
.big span svg { display: inline-block; margin: 0 -8px 5px 1px; }
.big .side { position: absolute; right: 3px; top: 57px; }
.vports .big { margin-left: -8px; letter-spacing: -.1px; }
.vp .row { gap: 5px; letter-spacing: -.1px; }
.rows.styles { padding: 4px 3px 0; }
.styles .combo { padding: 0 2px; }
.styles .combo span { padding-left: 0; margin-left: -1px; }
.vicons { display: grid; grid-template-columns: 22px 14px 24px 21px 14px 21px 5px; gap: 0; padding-left: 3px; }
.opac { padding-left: 3px; gap: 8px; }
.slider { width: 123px; height: 22px; border: 1px solid #343b48; display: flex; background: #3e4757; padding: 1px; color: #8d949f; }
.fillbar { width: 57px; background: #4a5568; padding: 1px 4px; color: #69717f; margin-right: auto; font-size: 12px; letter-spacing: -.1px; }
.num { width: 25px; border-left: 1px solid #343b48; text-align: center; padding: 1px 0 0 1px; background: #434d5e; }
.bigs { display: grid; }
.lights { grid-template-columns: 60px 65px; letter-spacing: -.1px; }
.sunp { grid-template-columns: 61px 34px; }
.off { color: #737a86; padding-top: 11px; }
.off svg:last-child { margin-top: 3px; color: #9da2a9; }
.off span { letter-spacing: 0; }
.mats { padding-left: 6px; }
.mats .row:nth-child(2) { letter-spacing: -.14px; }
.mats .row:nth-child(2) > .dn5 { margin-left: 0; }
.mats .row:nth-child(3) > .dn5 { margin-left: 4px; }
.mats .row:nth-child(3) { letter-spacing: -.07px; }
.camp { justify-content: center; padding-right: 0; }
.renderp { display: grid; grid-template-columns: 99px 100px 55px 45px; }
.rsel { padding-top: 5px; }
.rsel .combo { height: 21px; margin: 0 0 2px; padding: 0 3px 0 2px; letter-spacing: -.2px; }
.rsel .combo span { padding-bottom: 0; }
.prog { height: 22px; border: 1px solid #2b313c; display: flex; align-items: center; gap: 1px; padding: 0 0 0 1px; }
.prog i { flex: 1; height: 20px; background: linear-gradient(#4a556a 50%, #3f495b 50%, #4a556a 54%); }
.doctabs { height: 31px; flex: none; border-bottom: 4px solid #3b4453; padding: 5px 0 0 21px; display: flex; }
.dt { height: 22px; display: flex; align-items: center; }
.start { width: 130px; background: #303744; color: #b7bdc5; padding-left: 14px; clip-path: path("M0 22Q5 19 6 12L9 4Q11 0 16 0H122Q127 1 128 6L125 22Z"); }
.cur { width: 140px; margin-left: -8px; background: #3b4453; padding-left: 15px; gap: 8px; clip-path: path("M0 22Q4 20 5 13L7 5Q9 0 14 0H126Q131 1 132 7L135 17Q136 21 140 22Z"); letter-spacing: -.05px; }
.add { width: 24px; height: 14px; margin: 5px 0 0 4px; background: #303744; justify-content: center; clip-path: path("M0 0H18Q24 1 23 8L20 14H8Q3 13 2 7Z"); }
.viewport { height: 513px; flex: none; position: relative; background: #222830; }
.canvas { position: absolute; left: 0; top: 0; }
.vlabel { position: absolute; left: 6px; top: 6px; letter-spacing: .05px; }
.mdi { position: absolute; left: 1296px; top: 9px; }
.wcs { position: absolute; left: 1272px; top: 147px; width: 48px; height: 17px; border-radius: 4px; background: #989ba4; border: 1px solid #7f838d; color: #5c6069; display: flex; align-items: center; gap: 5px; padding: 0 0 1px 3px; font: 11px "Liberation Sans", sans-serif; letter-spacing: -.1px; }
.navbar { position: absolute; left: 1320px; top: 190px; }
.cube { font: bold 23px "Liberation Sans", sans-serif; fill: #4a515b; letter-spacing: 0; }
.compass { font: bold 46px "Liberation Sans", sans-serif; fill: #b2b4b7; letter-spacing: 0; }
.n { font-size: 38px; }
.history { position: absolute; left: 336px; top: 429px; display: grid; gap: 5px; font: 11.6px/15px "DejaVu Sans Mono", monospace; letter-spacing: 0; }
.history span { width: 60px; height: 15px; border-radius: 2px; background: #565656; padding-left: 2px; color: #ddd; }
.history .h1 { color: #a9a9a9; background: #4b4c4d; }
.history .h2 { color: #c8c8c8; background: #525353; }
.history .h3 { color: #f2f2f2; background: #5e5e5e; }
.cmd { position: absolute; left: 274px; top: 487px; width: 811px; height: 25px; display: flex; background: #2c323e; }
.cmdin { flex: 1; background: #fff; display: flex; align-items: center; gap: 2px; padding: 1px 0 0 4px; border-radius: 2px; }
.cmdin .g { color: #777; }
.cmdin i { width: 1px; height: 14px; background: #000; margin-left: 1px; }
.cmdin .up { margin-left: auto; margin-right: 3px; }
.status { height: 32px; flex: none; border-top: 1px solid #464b54; display: grid; grid-template-columns: 786px 47px 64px 169px 106px 40px 23px 24px 22px 48px; column-gap: 3px; align-items: start; padding-top: 1px; background: #222933; }
.ltabs { display: flex; height: 18px; }
.lt { height: 17px; text-align: center; line-height: 14px; font-size: 12px; color: #adb3bc; letter-spacing: -.25px; background: #2d3440; }
.model { width: 62px; margin-left: 12px; padding-left: 1px; background: #3b4453; color: #fff; font-weight: bold; clip-path: path("M0 0H62L55 12Q53 17 48 17H13Q9 17 7 12L5 6Q4 1 0 0Z"); }
.l2 { width: 65px; padding-right: 2px; clip-path: path("M0 0H65L60 12Q58 17 53 17H11Q7 16 5 10L2 2Z"); }
.plus { width: 28px; height: 15px; padding: 4px 0 0 8px; clip-path: path("M1 0H26Q26 14 17 15H6Q3 13 2 5Z"); margin-left: 2px; }
.sgroup { height: 23px; background: #3b4453; display: grid; align-items: center; justify-items: center; color: #d5d7d9; }
.sgroup b { width: 23px; height: 23px; background: #5e8bc0; color: #fff; display: grid; place-items: center; }
.s1 { font-size: 12px; letter-spacing: -.1px; color: #fff; }
.s2 { grid-template-columns: 23px 25px 16px; }
.s3 { grid-template-columns: 24px 24px 16px 24px 16px 26px 23px 16px; }
.s4 { grid-template-columns: 23px 25px 23px 20px 15px; }
.s4 span { color: #cde6ff; padding-left: 4px; }
.s5 { grid-template-columns: 22px 18px; }
.s6 { margin-left: -2px; width: 25px; }
.s9 { grid-template-columns: 22px 24px; }
.taskbar { height: 40px; flex: none; background: #1f2221; display: flex; font-size: 14px; letter-spacing: 0; position: relative; }
.win { width: 48px; display: grid; place-items: center; }
.tsearch { width: 344px; height: 40px; background: #333434; border: 1px solid #5a5a5a; display: flex; align-items: center; gap: 10px; padding-left: 11px; color: #dadada; letter-spacing: -.15px; }
.apps { display: grid; width: 640px; grid-template-columns: 50px repeat(12, 49.05px); }
.apps div { display: grid; place-items: center; position: relative; }
.apps .cortana { padding-right: 2px; }
.apps .run::after { content: ""; position: absolute; bottom: 0; left: 5px; width: 40px; height: 2px; background: #76b9ed; }
.apps .act { background: #50504f; }
.apps .act::after { left: 0; width: 48px; }
.tray { position: absolute; left: 1141px; top: 0; height: 40px; display: grid; grid-template-columns: 12px 34px 14px 48px 60px 56px; align-items: center; justify-items: center; font-size: 12px; line-height: 18px; }
.eng { letter-spacing: -.4px; }
.clock { display: flex; flex-direction: column; align-items: center; letter-spacing: -.4px; }
.note { margin-top: 4px; }
.edge { position: absolute; left: 1361px; top: 0; width: 1px; height: 40px; background: #5b5d5d; }
.watermark { position: absolute; left: 1073px; top: 650px; color: rgba(168, 168, 168, .62); white-space: nowrap; }
.wa { font-size: 19px; line-height: 24px; letter-spacing: .1px; }
.wb { font-size: 14px; line-height: 20px; margin-top: 1px; letter-spacing: .2px; }
```
